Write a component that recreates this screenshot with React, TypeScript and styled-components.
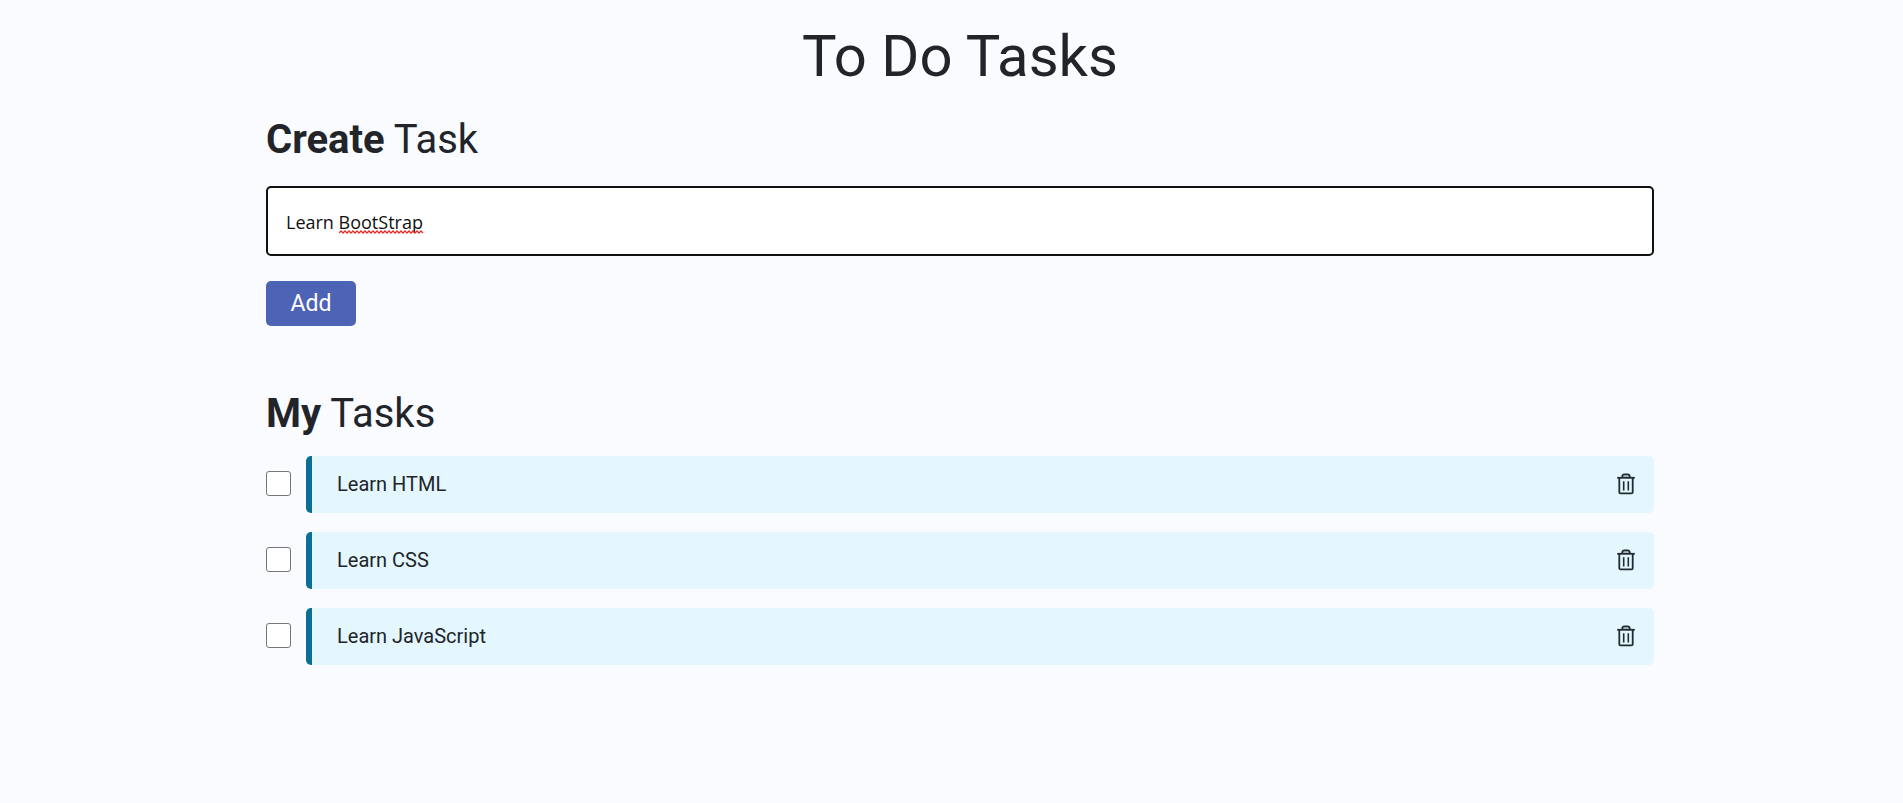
import React, { useState } from "react";
import styled, { createGlobalStyle } from "styled-components";

const GlobalStyle = createGlobalStyle`
  *, *::before, *::after { box-sizing: border-box; }
  body {
    margin: 0;
    background: #fafbff;
    color: #212529;
    font-family: Roboto, "Liberation Sans", sans-serif;
  }
`;

const Page = styled.main`
  padding: 20px 249px 40px 266px;
`;

const Title = styled.h1`
  margin: 0;
  font-size: 58px;
  font-weight: 400;
  line-height: 72px;
  text-align: center;
`;

const Section = styled.section`
  padding-top: 24px;

  & + & {
    padding-top: 64px;
  }
`;

const Heading = styled.h2`
  margin: 0;
  font-size: 40px;
  font-weight: 400;
  line-height: 48px;
`;

const Form = styled.form`
  display: flex;
  flex-direction: column;
  align-items: flex-start;
  gap: 25px;
  margin-top: 22px;
`;

const Field = styled.div`
  position: relative;
  width: 100%;
`;

const TextInput = styled.input`
  display: block;
  width: 100%;
  height: 70px;
  padding: 2px 18px 0;
  border: 2px solid #101010;
  border-radius: 5px;
  outline: none;
  background: #fff;
  color: #101010;
  font-family: "Open Sans", "Noto Sans", sans-serif;
  font-size: 18px;
`;

const SpellingMark = styled.svg`
  position: absolute;
  left: 73px;
  top: 44px;
  pointer-events: none;
`;

const AddButton = styled.button`
  width: 90px;
  height: 45px;
  padding: 0;
  border: 0;
  border-radius: 5px;
  background: #4d63b6;
  color: #fff;
  font-family: inherit;
  font-size: 23px;
  cursor: pointer;
`;

const TaskList = styled.ul`
  display: flex;
  flex-direction: column;
  gap: 19px;
  margin: 18px 0 0;
  padding: 0;
  list-style: none;
`;

const TaskRow = styled.li`
  display: flex;
  align-items: center;
  gap: 15px;
`;

const Check = styled.input`
  flex: none;
  appearance: none;
  width: 25px;
  height: 25px;
  margin: 0 0 2px;
  border: 1px solid #767676;
  border-radius: 3px;
  background: #fff;

  &:checked {
    background: #0c6f93;
  }
`;

const TaskCard = styled.div`
  display: flex;
  flex: 1;
  align-items: center;
  justify-content: space-between;
  height: 57px;
  padding: 0 15px 2px 25px;
  border-left: 6px solid #0c6f93;
  border-radius: 5px;
  background: #e4f6fe;
`;

const TaskLabel = styled.label`
  font-size: 20px;
  line-height: 24px;
`;

const DeleteButton = styled.button`
  display: flex;
  padding: 0;
  border: 0;
  background: none;
  color: #212b33;
  cursor: pointer;
`;

function TrashIcon() {
  return (
    <svg width="26" height="26" viewBox="0 0 26 26" fill="none" stroke="currentColor" strokeWidth="1.8">
      <path d="M9 6.4l.5-1.8c.2-.8.8-1.2 1.6-1.2h3.8c.8 0 1.4.4 1.6 1.2l.5 1.8" fill="#b9c6ce" />
      <path d="M4.2 6.8h17.6" />
      <path d="M6.3 7v14.2c0 .7.4 1.2 1.2 1.2h11c.8 0 1.2-.5 1.2-1.2V7" />
      <path d="M10.7 10.2v9.2M15.3 10.2v9.2" strokeWidth="1.6" />
    </svg>
  );
}

const tasks = ["Learn HTML", "Learn CSS", "Learn JavaScript"];
const squiggle = "M0 3" + Array.from({ length: 21 }, () => "l2 -2l2 2").join("");

export default function App() {
  const [text, setText] = useState("Learn BootStrap");

  return (
    <>
      <GlobalStyle />
      <Page>
        <Title>To Do Tasks</Title>
        <Section>
          <Heading><b>Create</b> Task</Heading>
          <Form onSubmit={(e) => e.preventDefault()}>
            <Field>
              <TextInput
                type="text"
                aria-label="Task"
                spellCheck={false}
                value={text}
                onChange={(e) => setText(e.target.value)}
              />
              {text === "Learn BootStrap" && (
                <SpellingMark width="86" height="4" viewBox="0 0 86 4" fill="none" stroke="#e0302c" strokeWidth="1.4" aria-hidden="true">
                  <path d={squiggle} />
                </SpellingMark>
              )}
            </Field>
            <AddButton type="submit">Add</AddButton>
          </Form>
        </Section>
        <Section>
          <Heading><b>My</b> Tasks</Heading>
          <TaskList>
            {tasks.map((task, i) => (
              <TaskRow key={task}>
                <Check type="checkbox" id={`task-${i}`} />
                <TaskCard>
                  <TaskLabel htmlFor={`task-${i}`}>{task}</TaskLabel>
                  <DeleteButton type="button" aria-label={`Delete ${task}`}>
                    <TrashIcon />
                  </DeleteButton>
                </TaskCard>
              </TaskRow>
            ))}
          </TaskList>
        </Section>
      </Page>
    </>
  );
}
